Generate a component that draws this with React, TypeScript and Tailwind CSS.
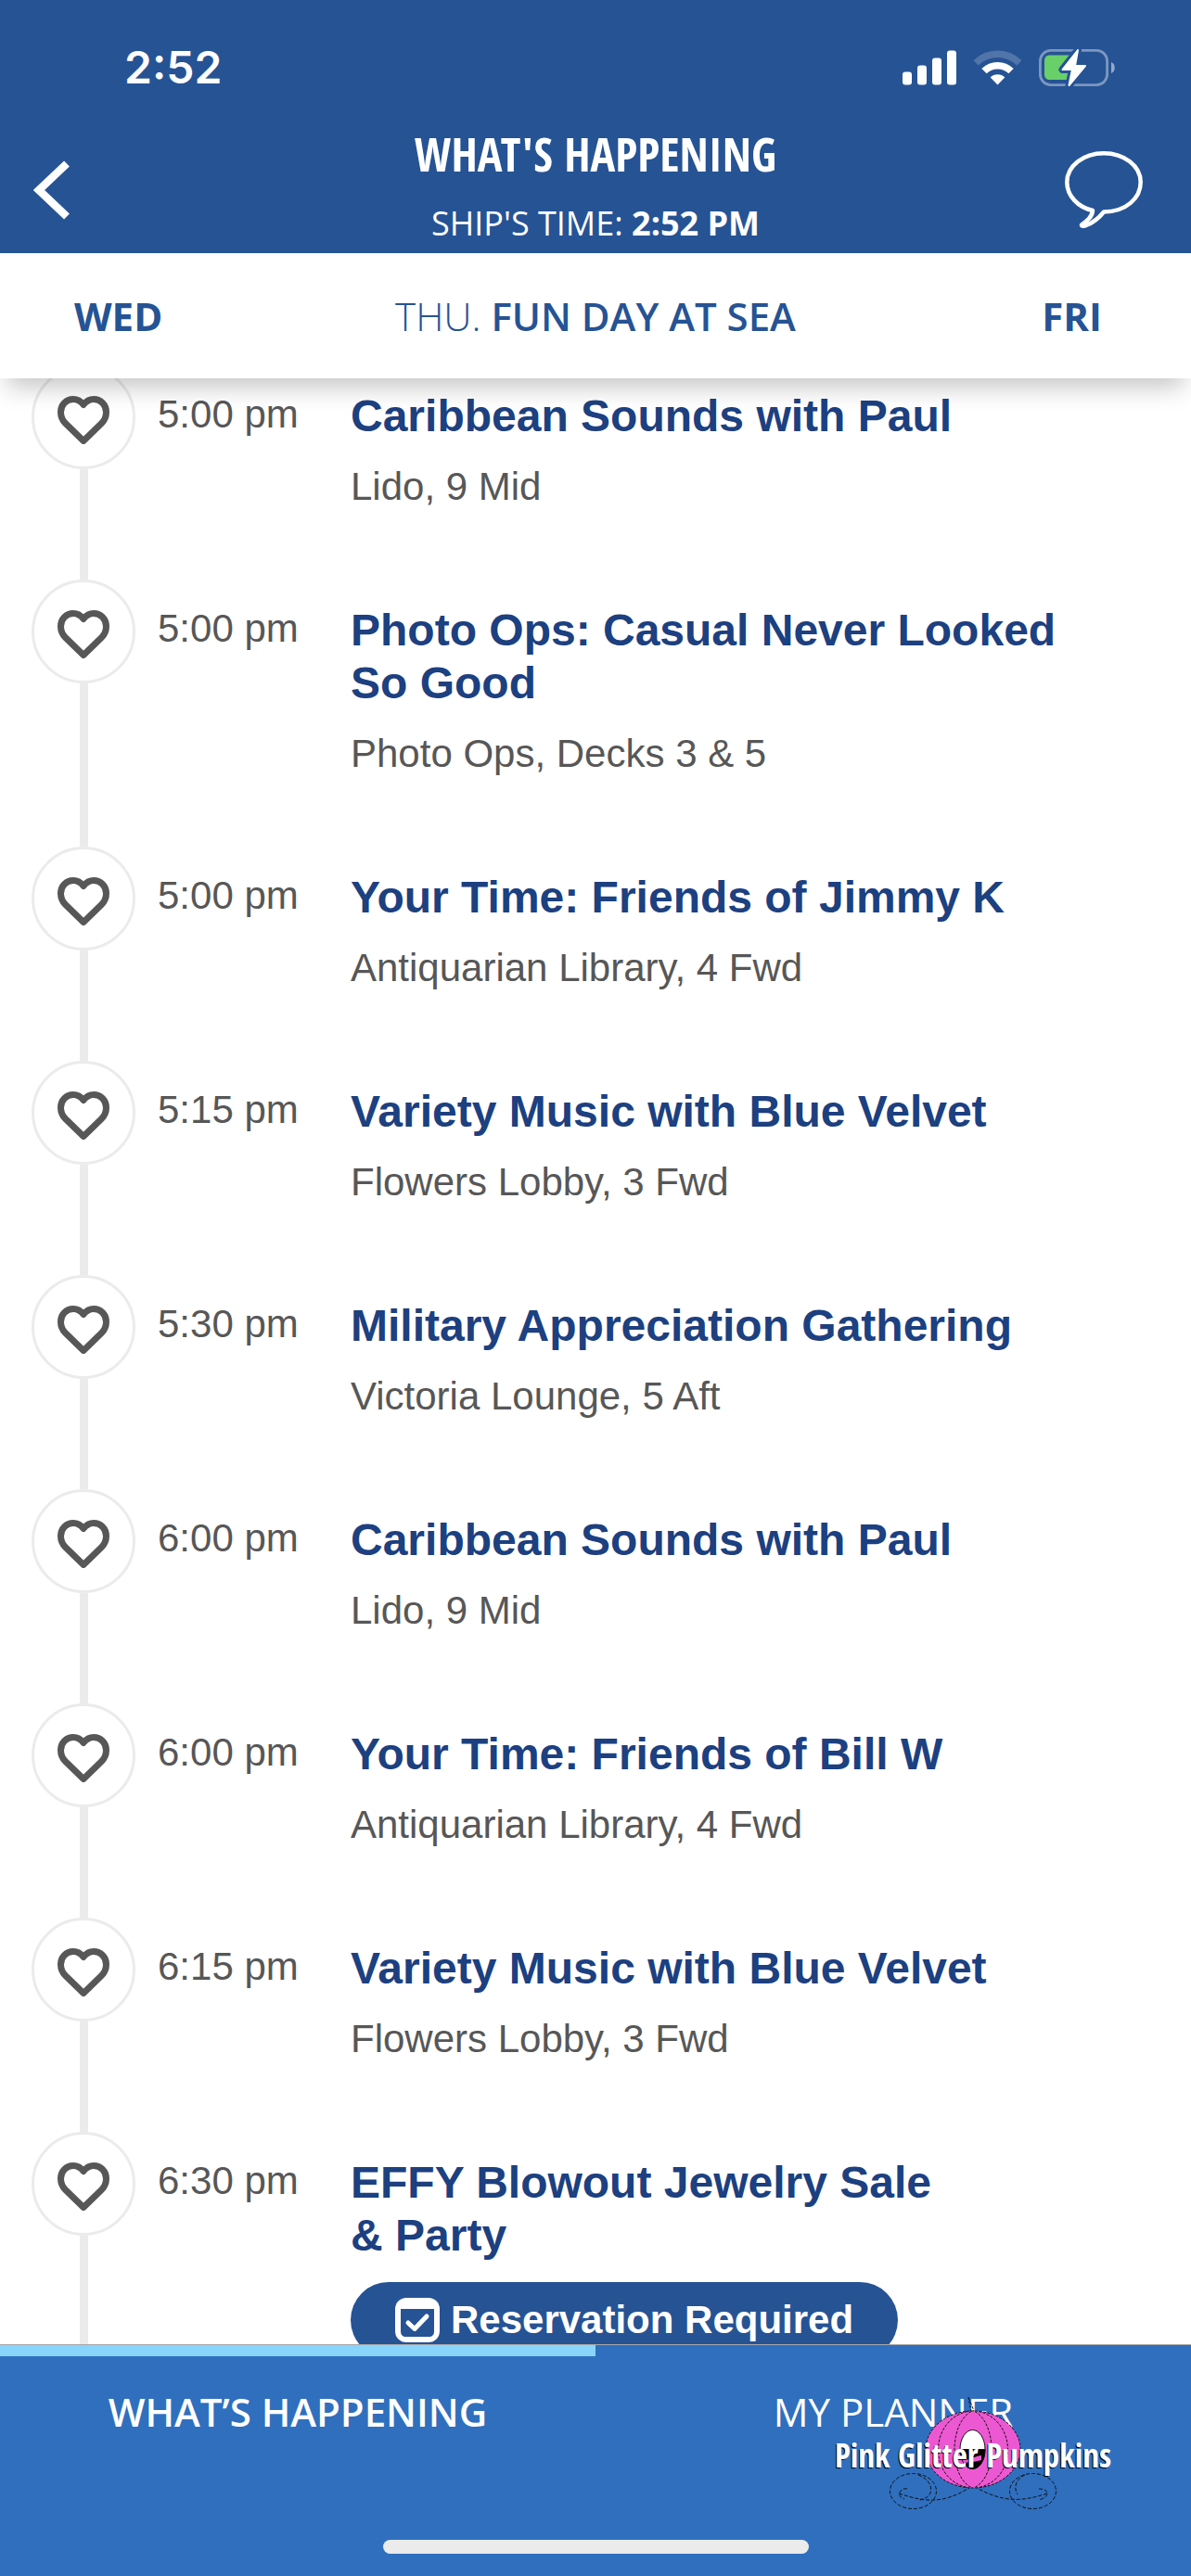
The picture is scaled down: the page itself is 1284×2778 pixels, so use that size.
import React, { useState } from 'react';

interface ShipEvent {
  id: string;
  time: string;
  title: string;
  location: string;
  reservation?: boolean;
}

const events: ShipEvent[] = [
  { id: '1', time: '5:00 pm', title: 'Caribbean Sounds with Paul', location: 'Lido, 9 Mid' },
  { id: '2', time: '5:00 pm', title: 'Photo Ops: Casual Never Looked So Good', location: 'Photo Ops, Decks 3 & 5' },
  { id: '3', time: '5:00 pm', title: 'Your Time: Friends of Jimmy K', location: 'Antiquarian Library, 4 Fwd' },
  { id: '4', time: '5:15 pm', title: 'Variety Music with Blue Velvet', location: 'Flowers Lobby, 3 Fwd' },
  { id: '5', time: '5:30 pm', title: 'Military Appreciation Gathering', location: 'Victoria Lounge, 5 Aft' },
  { id: '6', time: '6:00 pm', title: 'Caribbean Sounds with Paul', location: 'Lido, 9 Mid' },
  { id: '7', time: '6:00 pm', title: 'Your Time: Friends of Bill W', location: 'Antiquarian Library, 4 Fwd' },
  { id: '8', time: '6:15 pm', title: 'Variety Music with Blue Velvet', location: 'Flowers Lobby, 3 Fwd' },
  { id: '9', time: '6:30 pm', title: 'EFFY Blowout Jewelry Sale &\u00a0Party', location: '', reservation: true },
];

function SignalIcon() {
  return (
    <svg width="58" height="38" viewBox="0 0 58 38" fill="white" aria-hidden="true">
      <rect x="0" y="23.5" width="10" height="14" rx="3" />
      <rect x="16" y="16.5" width="10" height="21" rx="3" />
      <rect x="32" y="8.5" width="10" height="29" rx="3" />
      <rect x="48" y="0.5" width="10" height="37" rx="3" />
    </svg>
  );
}

function WifiIcon() {
  return (
    <svg width="51" height="38" viewBox="0 0 51 38" fill="none" aria-hidden="true">
      <path d="M2.2 13.9A33 33 0 0 1 48.8 13.9" stroke="white" strokeOpacity="0.2" strokeWidth="7.5" />
      <path d="M11 22.7A20.5 20.5 0 0 1 40 22.7" stroke="white" strokeWidth="7.5" />
      <path d="M25.5 37.5L17.7 29.6A11 11 0 0 1 33.3 29.6Z" fill="white" />
    </svg>
  );
}

function BatteryIcon() {
  return (
    <svg width="82" height="42" viewBox="0 -1 82 42" fill="none" aria-hidden="true">
      <rect x="1.4" y="1.4" width="72.2" height="37.2" rx="11.5" stroke="white" strokeOpacity="0.4" strokeWidth="2.8" />
      <path d="M78 14C83 15.5 83 24.5 78 26Z" fill="white" fillOpacity="0.5" />
      <path d="M12 6.5H38V33H12C8.5 33 6 31 6 27V12.5C6 8.5 8.5 6.5 12 6.5Z" fill="#69cf69" />
      <path d="M42 1L25.5 22H36L32.5 39L50 18H39Z" fill="#265394" stroke="#265394" strokeWidth="8" strokeLinejoin="round" />
      <path d="M42 1L25.5 22H36L32.5 39L50 18H39Z" fill="white" stroke="white" strokeWidth="2" strokeLinejoin="round" />
    </svg>
  );
}

function BackIcon() {
  return (
    <svg width="40" height="64" viewBox="0 0 40 64" fill="none" stroke="white" strokeWidth="8.5" aria-hidden="true">
      <path d="M36 3.5L6 32L36 60.5" />
    </svg>
  );
}

function ChatIcon() {
  return (
    <svg width="84" height="84" viewBox="0 0 84 84" fill="none" stroke="white" strokeWidth="4.5" strokeLinejoin="round" aria-hidden="true">
      <path d="M42 65.5C66 65.5 81.7 50.5 81.7 33.5C81.7 16 64 2.3 42 2.3C20 2.3 2.3 16 2.3 33.5C2.3 48 14 60.5 30 64C29.5 71 24 75 18 79.5C18 81 21 81 23 80C31 77 36 73 42 65.5Z" />
    </svg>
  );
}

function HeartIcon() {
  return (
    <svg width="56" height="52" viewBox="0 0 56 52" fill="none" stroke="#575757" strokeWidth="7" strokeLinejoin="round" aria-hidden="true">
      <path d="M28 9.5C25 5.5 21 3.5 17 3.5C9.5 3.5 3.5 9.5 3.5 17.5C3.5 22 5 26 8.5 29.5L28 48.5L47.5 29.5C51 26 52.5 22 52.5 17.5C52.5 9.5 46.5 3.5 39 3.5C35 3.5 31 5.5 28 9.5Z" />
    </svg>
  );
}

function CalendarCheckIcon() {
  return (
    <svg width="48" height="48" viewBox="0 0 48 48" fill="none" aria-hidden="true">
      <rect width="48" height="48" rx="12" fill="white" />
      <path d="M6 12H42V36C42 40 40 42 36 42H12C8 42 6 40 6 36Z" fill="#265394" />
      <path d="M14 27L21 33.5L34 20" stroke="white" strokeWidth="5" strokeLinecap="round" strokeLinejoin="round" />
    </svg>
  );
}

function PumpkinLogo() {
  return (
    <svg width="302" height="128" viewBox="0 -16 302 128" fill="none" stroke="#111111" strokeWidth="1" aria-hidden="true">
      <path d="M149 5L146 -11L152 4" strokeDasharray="3 1.5" />
      <ellipse cx="151" cy="45.5" rx="51" ry="41.5" fill="#ec58d1" strokeDasharray="3 1.5" />
      <path d="M145 4.5C103 14 103 78 145 86.5" strokeDasharray="3 1.5" />
      <path d="M149 4.5C125 18 125 74 149 86.5" strokeDasharray="3 1.5" />
      <path d="M153 4.5C177 18 177 74 153 86.5" strokeDasharray="3 1.5" />
      <path d="M157 4.5C199 14 199 78 157 86.5" strokeDasharray="3 1.5" />
      <ellipse cx="150.5" cy="45.5" rx="13.5" ry="21" fill="white" />
      <path d="M137 45.5H164C164 57 158 66.5 150.5 66.5C143 66.5 137 57 137 45.5Z" fill="#000000" />
      <path d="M139 56C145 59 154 52 160 52V57C154 59 147 59 141 60Z" fill="#ec58d1" stroke="none" />
      <g strokeDasharray="4 2">
        <ellipse cx="86.5" cy="90.5" rx="25" ry="19" />
        <path d="M92 73C110 80 110 98 93 100" />
        <path d="M80 88C72 86 68 97 77 99" />
        <path d="M71 93C96 101 116 106 147 87" />
        <ellipse cx="215.5" cy="90.5" rx="25" ry="19" />
        <path d="M207 73C196 78 195 88 199 94" />
        <path d="M222 88C234 88 234 97 222 100" />
        <path d="M231 93C206 101 186 104 155 87" />
      </g>
    </svg>
  );
}

function EventRow({ event }: { event: ShipEvent }) {
  const [liked, setLiked] = useState(false);

  return (
    <li className="flex">
      <div className="ml-[34px] w-28 shrink-0 flex flex-col items-center">
        <button
          type="button"
          aria-label={`Favorite ${event.title}`}
          aria-pressed={liked}
          onClick={() => setLiked(!liked)}
          className="size-28 shrink-0 rounded-full border-3 border-[#ebebeb] bg-white flex items-center justify-center pt-1.5"
        >
          <HeartIcon />
        </button>
        <div className="w-[9px] flex-1 bg-[#ebebeb]" />
      </div>
      <time className="ml-6 w-52 shrink-0 pt-6 text-[42px] leading-[57px] text-[#575757]">{event.time}</time>
      <div className="min-w-0 flex-1 pt-[26px] pb-[76px] pr-[124px]">
        <h2 className="text-5xl leading-[57px] font-bold text-[#1c4080]">{event.title}</h2>
        {event.reservation ? (
          <div className="mt-[22px] inline-flex h-[82px] items-center gap-3 rounded-full bg-[#265394] px-12 text-[42px] leading-[48px] font-bold text-white">
            <CalendarCheckIcon />
            <span>Reservation Required</span>
          </div>
        ) : (
          <p className="mt-6 text-[42px] leading-[48px] text-[#575757]">{event.location}</p>
        )}
      </div>
    </li>
  );
}

export default function App() {
  const [tab, setTab] = useState<'happening' | 'planner'>('happening');

  return (
    <div className="h-screen flex flex-col overflow-hidden bg-white font-['Liberation_Sans',Arial,sans-serif]">
      <header className="bg-[#265394] text-white font-['Open_Sans',sans-serif]">
        <div className="flex items-center justify-between pt-11 pl-[134px] pr-[82px]">
          <span className="text-5xl leading-[57px] font-semibold font-['Inter',sans-serif]">2:52</span>
          <div className="flex items-center gap-[19px]">
            <SignalIcon />
            <WifiIcon />
            <BatteryIcon />
          </div>
        </div>
        <div className="mt-9 grid grid-cols-[1fr_auto_1fr] items-center px-9">
          <button type="button" aria-label="Back" className="justify-self-start">
            <BackIcon />
          </button>
          <div className="pb-2 text-center">
            <h1 className="text-[50px] leading-[58px] font-bold font-['Open_Sans_Condensed','Roboto_Condensed',sans-serif]">WHAT'S HAPPENING</h1>
            <p className="mt-[22px] text-4xl leading-[48px]">
              SHIP'S TIME: <span className="font-bold">2:52 PM</span>
            </p>
          </div>
          <button type="button" aria-label="Messages" className="mr-4 justify-self-end">
            <ChatIcon />
          </button>
        </div>
      </header>

      <nav className="relative z-10 grid grid-cols-[1fr_auto_1fr] items-center bg-white px-20 py-10 text-[42px] leading-[55px] text-[#265394] shadow-[0_18px_24px_-8px_rgba(0,0,0,0.22)] font-['Open_Sans',sans-serif]">
        <button type="button" className="justify-self-start font-bold">WED</button>
        <button type="button" className="font-light">
          THU. <span className="font-semibold">FUN DAY AT SEA</span>
        </button>
        <button type="button" className="justify-self-end pr-4 font-bold">FRI</button>
      </nav>

      <main className="min-h-0 flex-1 overflow-hidden">
        <ul className="-mt-3.5">
          {events.map((event) => (
            <EventRow key={event.id} event={event} />
          ))}
        </ul>
      </main>

      <footer className="relative border-t border-[#a8a8a8] bg-[#2f6fbe] text-white font-['Open_Sans',sans-serif]">
        <div className="grid grid-cols-2 text-[42px] leading-[56px]">
          <button
            type="button"
            onClick={() => setTab('happening')}
            className={`border-t-12 pt-8 ${tab === 'happening' ? 'border-[#89d4fb] font-semibold' : 'border-transparent font-normal'}`}
          >
            WHAT’S HAPPENING
          </button>
          <button
            type="button"
            onClick={() => setTab('planner')}
            className={`border-t-12 pt-8 ${tab === 'planner' ? 'border-[#89d4fb] font-semibold' : 'border-transparent font-normal'}`}
          >
            MY PLANNER
          </button>
        </div>
        <div className="mx-auto mt-[110px] mb-6 h-[15px] w-[459px] rounded-full bg-[#ebebeb]" />

        <div className="pointer-events-none absolute right-[84px] bottom-[70px]">
          <PumpkinLogo />
          <span className="absolute inset-x-0 top-11 text-center text-[35px] leading-[48px] font-bold whitespace-nowrap [text-shadow:-1px_1px_0_#000] font-['Open_Sans_Condensed','Roboto_Condensed',sans-serif]">
            Pink Glitter Pumpkins
          </span>
        </div>
      </footer>
    </div>
  );
}
